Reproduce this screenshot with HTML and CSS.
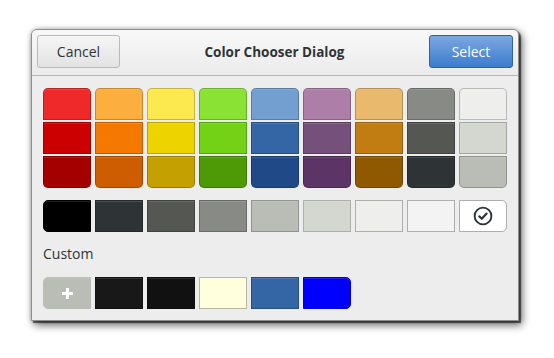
FILE: index.html
```html
<!DOCTYPE html>
<html>
<head>
<meta charset="utf-8">
<link rel="stylesheet" href="styles.css">
</head>
<body>
<div class="window">
  <div class="header">
    <button class="btn btn-cancel">Cancel</button>
    <div class="title">Color Chooser Dialog</div>
    <button class="btn btn-select">Select</button>
  </div>
  <div class="content">
    <div class="palette">
      <div class="sw" style="background:#ef2929"></div>
      <div class="sw" style="background:#fcaf3e"></div>
      <div class="sw" style="background:#fce94f"></div>
      <div class="sw" style="background:#8ae234"></div>
      <div class="sw" style="background:#729fcf"></div>
      <div class="sw" style="background:#ad7fa8"></div>
      <div class="sw" style="background:#e9b96e"></div>
      <div class="sw" style="background:#888a85"></div>
      <div class="sw" style="background:#eeeeec"></div>

      <div class="sw" style="background:#cc0000"></div>
      <div class="sw" style="background:#f57900"></div>
      <div class="sw" style="background:#edd400"></div>
      <div class="sw" style="background:#73d216"></div>
      <div class="sw" style="background:#3465a4"></div>
      <div class="sw" style="background:#75507b"></div>
      <div class="sw" style="background:#c17d11"></div>
      <div class="sw" style="background:#555753"></div>
      <div class="sw" style="background:#d3d7cf"></div>

      <div class="sw" style="background:#a40000"></div>
      <div class="sw" style="background:#ce5c00"></div>
      <div class="sw" style="background:#c4a000"></div>
      <div class="sw" style="background:#4e9a06"></div>
      <div class="sw" style="background:#204a87"></div>
      <div class="sw" style="background:#5c3566"></div>
      <div class="sw" style="background:#8f5902"></div>
      <div class="sw" style="background:#2e3436"></div>
      <div class="sw" style="background:#babdb6"></div>
    </div>

    <div class="row greys">
      <div class="sw" style="background:#000000;border-color:#000"></div>
      <div class="sw" style="background:#2e3436"></div>
      <div class="sw" style="background:#555753"></div>
      <div class="sw" style="background:#888a85"></div>
      <div class="sw" style="background:#babdb6"></div>
      <div class="sw" style="background:#d3d7cf"></div>
      <div class="sw" style="background:#eeeeec"></div>
      <div class="sw" style="background:#f3f3f3"></div>
      <div class="sw selected" style="background:#ffffff">
        <svg width="20" height="20" viewBox="0 0 20 20">
          <circle cx="10" cy="10" r="8.4" fill="none" stroke="#2e3436" stroke-width="1.9"/>
          <path d="M6.3 10.4 L8.8 12.8 L13.6 7.6" fill="none" stroke="#2e3436" stroke-width="2.2" stroke-linecap="round" stroke-linejoin="round"/>
        </svg>
      </div>
    </div>

    <div class="label">Custom</div>

    <div class="row custom">
      <div class="sw add">
        <svg width="11" height="11" viewBox="0 0 11 11">
          <rect x="4" y="0" width="3" height="11" fill="#fff"/>
          <rect x="0" y="4" width="11" height="3" fill="#fff"/>
        </svg>
      </div>
      <div class="sw" style="background:#181818"></div>
      <div class="sw" style="background:#111111"></div>
      <div class="sw" style="background:#ffffdd;border-color:#b8b8a0"></div>
      <div class="sw" style="background:#3465a4"></div>
      <div class="sw" style="background:#0000ff;border-color:#0000d0"></div>
    </div>
  </div>
</div>
</body>
</html>
```

FILE: styles.css
```css
html, body {
  margin: 0;
  padding: 0;
  background: #ffffff;
}

body {
  font-family: "Open Sans", "Noto Sans", "DejaVu Sans", sans-serif;
  font-size: 14px;
  color: #2e3436;
  padding: 29px 0 0 31px;
  height: 358px;
  box-sizing: border-box;
}

.window {
  box-sizing: border-box;
  width: 488px;
  height: 292px;
  border: 1px solid #8e8e8c;
  border-radius: 6px 6px 0 0;
  background: #ededed;
  box-shadow: 2px 2px 1px rgba(0, 0, 0, 0.55), 3px 4px 8px rgba(0, 0, 0, 0.6), 0 0 4px rgba(0, 0, 0, 0.25);
  display: flex;
  flex-direction: column;
}

.header {
  height: 46px;
  flex: none;
  box-sizing: border-box;
  padding: 5px 5px 7px 5px;
  display: flex;
  align-items: center;
  justify-content: space-between;
  background: linear-gradient(to bottom, #f8f8f8, #ebebeb);
  border-bottom: 1px solid #b3b3b0;
  border-radius: 5px 5px 0 0;
}

.btn {
  box-sizing: border-box;
  height: 33px;
  border-radius: 3px;
  font-family: inherit;
  font-size: 14px;
  padding: 0;
}

.btn-cancel {
  width: 83px;
  color: #2e3436;
  background: linear-gradient(to bottom, #f6f6f6, #e2e2e2);
  border: 1px solid #b9b9b6;
}

.btn-select {
  width: 84px;
  color: #ffffff;
  background: linear-gradient(to bottom, #7aa8e2, #3d7ccc);
  border: 1px solid #2e62a3;
}

.title {
  font-weight: bold;
  font-size: 13.5px;
  color: #2e3436;
}

.content {
  padding: 12px 11px 0 11px;
  display: flex;
  flex-direction: column;
}

.palette {
  display: grid;
  grid-template-columns: repeat(9, 48px);
  grid-auto-rows: 32px;
  column-gap: 4px;
  row-gap: 2px;
}

.sw {
  box-sizing: border-box;
  border: 1px solid rgba(0, 0, 0, 0.22);
  box-shadow: inset 0 1px rgba(255, 255, 255, 0.12);
  display: flex;
  align-items: center;
  justify-content: center;
}

.palette .sw:nth-child(-n+9) {
  border-radius: 5px 5px 0 0;
}

.palette .sw:nth-child(n+19) {
  border-radius: 0 0 5px 5px;
}

.row {
  display: flex;
  gap: 4px;
}

.row .sw {
  width: 48px;
  height: 32px;
}

.greys {
  margin-top: 12px;
}

.row .sw:first-child {
  border-radius: 5px 0 0 5px;
}

.row .sw:last-child {
  border-radius: 0 5px 5px 0;
}

.greys .sw:nth-child(n+6) {
  border-color: #aeaeac;
}

.selected {
  border-color: #b8b8b6;
}

.label {
  margin-top: 12px;
  height: 20px;
  line-height: 20px;
  font-size: 14px;
  color: #2e3436;
}

.custom {
  margin-top: 13px;
}

.add {
  background: #babdb6;
  border-color: #babdb6;
}
```
